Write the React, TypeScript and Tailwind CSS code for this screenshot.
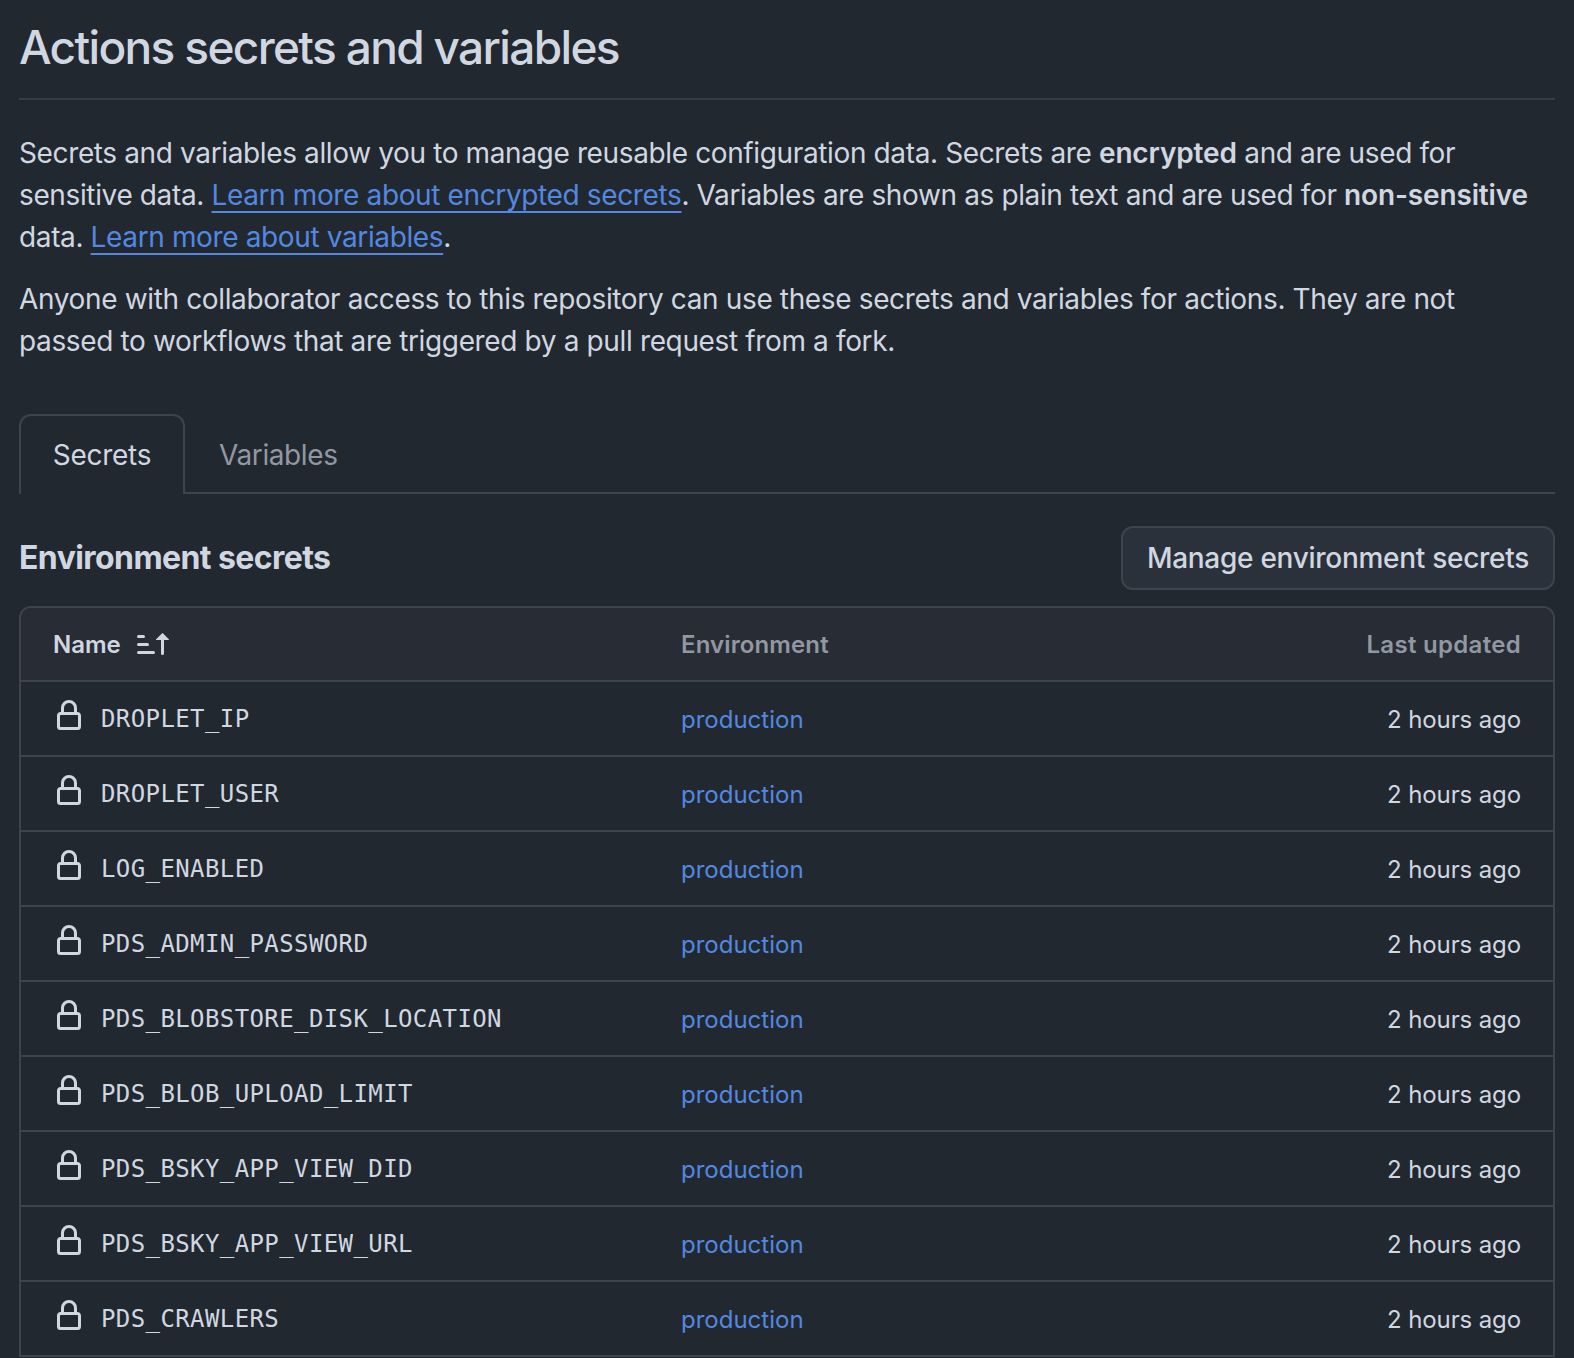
import React from "react";

const secrets = [
  "DROPLET_IP",
  "DROPLET_USER",
  "LOG_ENABLED",
  "PDS_ADMIN_PASSWORD",
  "PDS_BLOBSTORE_DISK_LOCATION",
  "PDS_BLOB_UPLOAD_LIMIT",
  "PDS_BSKY_APP_VIEW_DID",
  "PDS_BSKY_APP_VIEW_URL",
  "PDS_CRAWLERS",
];

function LockIcon() {
  return (
    <svg viewBox="0 0 16 16" className="mb-[5px] size-8 shrink-0" fill="currentColor" aria-hidden="true">
      <path d="M4 4a4 4 0 0 1 8 0v2h.25c.966 0 1.75.784 1.75 1.75v5.5A1.75 1.75 0 0 1 12.25 15h-8.5A1.75 1.75 0 0 1 2 13.25v-5.5C2 6.784 2.784 6 3.75 6H4Zm8.25 3.5h-8.5a.25.25 0 0 0-.25.25v5.5c0 .138.112.25.25.25h8.5a.25.25 0 0 0 .25-.25v-5.5a.25.25 0 0 0-.25-.25ZM10.5 6V4a2.5 2.5 0 1 0-5 0v2Z" />
    </svg>
  );
}

function SortAscIcon() {
  return (
    <svg viewBox="0 0 16 16" className="size-8 shrink-0" fill="currentColor" aria-hidden="true">
      <path d="m12.927 2.573 3 3A.25.25 0 0 1 15.75 6H13.5v6.75a.75.75 0 0 1-1.5 0V6H9.75a.25.25 0 0 1-.177-.427l3-3a.25.25 0 0 1 .354 0ZM0 12.25a.75.75 0 0 1 .75-.75h7.5a.75.75 0 0 1 0 1.5H.75a.75.75 0 0 1-.75-.75Zm0-4a.75.75 0 0 1 .75-.75h4.5a.75.75 0 0 1 0 1.5H.75A.75.75 0 0 1 0 8.25Zm0-4a.75.75 0 0 1 .75-.75h2.5a.75.75 0 0 1 0 1.5H.75A.75.75 0 0 1 0 4.25Z" />
    </svg>
  );
}

function TextLink({ children }: { children: React.ReactNode }) {
  return (
    <a href="#" className="text-[#5488e0] underline decoration-2 underline-offset-[6px] [text-decoration-skip-ink:none]">
      {children}
    </a>
  );
}

export default function App() {
  return (
    <main className="h-[1358px] overflow-hidden bg-[#212830] px-[19px] font-['Inter',sans-serif] text-[28px] leading-[42px] whitespace-nowrap text-[#d1d7e0]">
      <h1 className="h-[100px] border-b-2 border-[#363c45] pt-[11px] text-[46px] leading-[72px] font-medium tracking-[-1.65px]">
        Actions secrets and variables
      </h1>

      <p className="mt-8 tracking-[-0.37px]">
        Secrets and variables allow you to manage reusable configuration data. Secrets are{" "}
        <strong className="font-semibold tracking-[-0.15px]">encrypted</strong> and are used for
        <br />
        sensitive data. <TextLink>Learn more about encrypted secrets</TextLink>. Variables are shown as plain text and
        are used for <strong className="font-semibold tracking-[-0.15px]">non-sensitive</strong>
        <br />
        data. <TextLink>Learn more about variables</TextLink>.
      </p>
      <p className="mt-5 tracking-[-0.36px]">
        Anyone with collaborator access to this repository can use these secrets and variables for actions. They are not
        <br />
        passed to workflows that are triggered by a pull request from a fork.
      </p>

      <nav className="mt-[52px] flex h-20">
        <a
          href="#"
          className="flex w-[166px] items-center justify-center rounded-t-xl border-2 border-b-0 border-[#3d444d] tracking-[-0.25px]"
        >
          Secrets
        </a>
        <a
          href="#"
          className="flex flex-1 items-center border-b-2 border-[#3d444d] pt-1 pl-[34px] tracking-[-0.4px] text-[#9198a1]"
        >
          Variables
        </a>
      </nav>

      <section>
        <header className="mt-8 flex h-16 items-center justify-between">
          <h2 className="text-[32px] font-bold tracking-[-0.58px]">Environment secrets</h2>
          <button className="flex h-16 w-[434px] items-center justify-center rounded-xl border-2 border-[#3d444d] bg-[#2a313b] font-medium tracking-[-0.28px]">
            Manage environment secrets
          </button>
        </header>

        <div className="mt-4 rounded-t-xl border-2 border-b-0 border-[#3d444d] text-2xl">
          <div className="flex h-[74px] items-center rounded-t-[10px] border-b-2 border-[#3d444d] bg-[#282c34] px-8 font-semibold text-[#9198a1]">
            <div className="flex w-[628px] items-center gap-4 text-[#d1d7e0]">
              <span className="w-[68px] pt-0.5">Name</span>
              <SortAscIcon />
            </div>
            <span className="flex-1 pt-0.5 tracking-[0.12px]">Environment</span>
            <span className="pt-0.5 tracking-[0.3px]">Last updated</span>
          </div>
          {secrets.map((name) => (
            <div key={name} className="flex h-[75px] items-center border-b-2 border-[#3d444d] px-8">
              <div className="flex w-[628px] items-center gap-4">
                <LockIcon />
                <code className="font-['DejaVu_Sans_Mono',monospace] tracking-[0.4px]">{name}</code>
              </div>
              <a href="#" className="flex-1 pt-0.5 text-[#5488e0]">
                production
              </a>
              <span className="pt-0.5 tracking-[-0.12px]">2 hours ago</span>
            </div>
          ))}
        </div>
      </section>
    </main>
  );
}
